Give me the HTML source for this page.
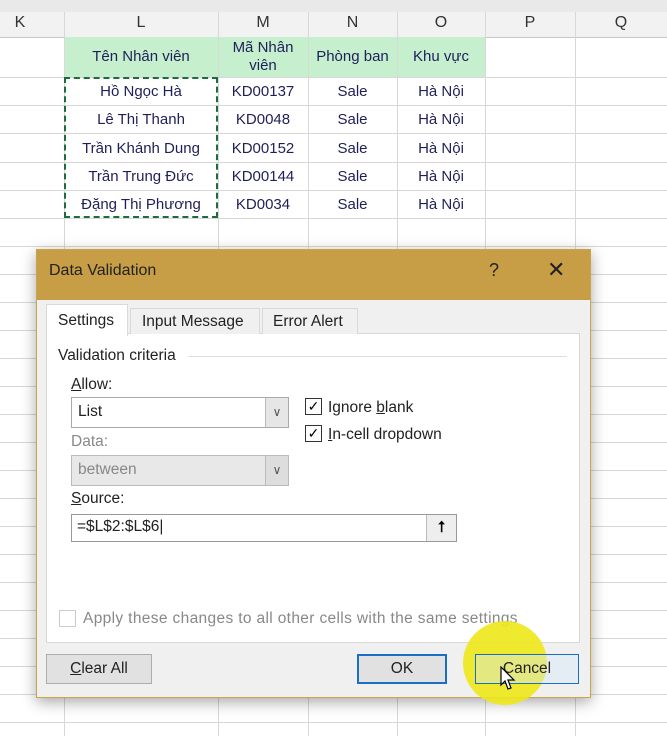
<!DOCTYPE html><html><head><style>
body{margin:0;width:667px;height:736px;overflow:hidden;background:#fff;font-family:"Liberation Sans",sans-serif;position:relative}
.a{position:absolute}
.hl{position:absolute;left:0;width:667px;height:1px;background:#d8d8d8}
.vl{position:absolute;top:12px;height:724px;width:1px;background:#d8d8d8}
.c{position:absolute;text-align:center;font-size:15px;color:#1f1f5a}
.d{font-size:15.5px;color:#222}
</style></head><body>
<div class="a" style="left:0;top:0;width:667px;height:12px;background:#e9e9e9"></div>
<div class="a" style="left:0;top:12px;width:667px;height:25px;background:#f2f2f2;border-bottom:1px solid #c8c8c8"></div>
<div class="a" style="left:64px;top:37px;width:421px;height:40px;background:#c6efce"></div>
<div class="vl" style="left:64px"></div><div class="vl" style="left:218px"></div><div class="vl" style="left:308px"></div><div class="vl" style="left:397px"></div><div class="vl" style="left:485px"></div><div class="vl" style="left:575px"></div>
<div class="hl" style="top:77px"></div><div class="hl" style="top:105px"></div><div class="hl" style="top:133px"></div><div class="hl" style="top:162px"></div><div class="hl" style="top:190px"></div><div class="hl" style="top:218px"></div><div class="hl" style="top:246px"></div><div class="hl" style="top:274px"></div><div class="hl" style="top:302px"></div><div class="hl" style="top:330px"></div><div class="hl" style="top:358px"></div><div class="hl" style="top:386px"></div><div class="hl" style="top:414px"></div><div class="hl" style="top:442px"></div><div class="hl" style="top:470px"></div><div class="hl" style="top:498px"></div><div class="hl" style="top:526px"></div><div class="hl" style="top:554px"></div><div class="hl" style="top:582px"></div><div class="hl" style="top:610px"></div><div class="hl" style="top:638px"></div><div class="hl" style="top:666px"></div><div class="hl" style="top:694px"></div><div class="hl" style="top:722px"></div>
<div class="c" style="left:0;top:14px;width:40px;color:#333;font-size:16px">K</div>
<div class="c" style="left:64px;top:14px;width:154px;color:#333;font-size:16px">L</div>
<div class="c" style="left:218px;top:14px;width:90px;color:#333;font-size:16px">M</div>
<div class="c" style="left:308px;top:14px;width:89px;color:#333;font-size:16px">N</div>
<div class="c" style="left:397px;top:14px;width:88px;color:#333;font-size:16px">O</div>
<div class="c" style="left:485px;top:14px;width:90px;color:#333;font-size:16px">P</div>
<div class="c" style="left:575px;top:14px;width:92px;color:#333;font-size:16px">Q</div>
<div class="c" style="left:64px;top:48px;width:154px">Tên Nhân viên</div>
<div class="c" style="left:218px;top:39px;width:90px;line-height:18px">Mã Nhân<br>viên</div>
<div class="c" style="left:308px;top:48px;width:89px">Phòng ban</div>
<div class="c" style="left:397px;top:48px;width:88px">Khu vực</div>
<div class="a" style="left:64px;top:77px;width:150px;height:137px;border:2px dashed #1e6b3e"></div>
<div class="c" style="left:64px;top:83px;width:154px">Hồ Ngọc Hà</div><div class="c" style="left:218px;top:83px;width:90px">KD00137</div><div class="c" style="left:308px;top:83px;width:89px">Sale</div><div class="c" style="left:397px;top:83px;width:88px">Hà Nội</div>
<div class="c" style="left:64px;top:111px;width:154px">Lê Thị Thanh</div><div class="c" style="left:218px;top:111px;width:90px">KD0048</div><div class="c" style="left:308px;top:111px;width:89px">Sale</div><div class="c" style="left:397px;top:111px;width:88px">Hà Nội</div>
<div class="c" style="left:64px;top:140px;width:154px">Trần Khánh Dung</div><div class="c" style="left:218px;top:140px;width:90px">KD00152</div><div class="c" style="left:308px;top:140px;width:89px">Sale</div><div class="c" style="left:397px;top:140px;width:88px">Hà Nội</div>
<div class="c" style="left:64px;top:168px;width:154px">Trần Trung Đức</div><div class="c" style="left:218px;top:168px;width:90px">KD00144</div><div class="c" style="left:308px;top:168px;width:89px">Sale</div><div class="c" style="left:397px;top:168px;width:88px">Hà Nội</div>
<div class="c" style="left:64px;top:196px;width:154px">Đặng Thị Phương</div><div class="c" style="left:218px;top:196px;width:90px">KD0034</div><div class="c" style="left:308px;top:196px;width:89px">Sale</div><div class="c" style="left:397px;top:196px;width:88px">Hà Nội</div>

<div class="a" style="left:36px;top:249px;width:553px;height:447px;background:#f0f0f0;border:1px solid #c9a54a;box-shadow:0 4px 14px rgba(0,0,0,.35)">
<div class="a" style="left:0;top:0;width:553px;height:50px;background:#c79e45"></div>
<div class="a d" style="left:12px;top:12px;font-size:16px">Data Validation</div>
<div class="a d" style="left:452px;top:10px;font-size:18px">?</div>
<div class="a d" style="left:510px;top:7px;font-size:22px">✕</div>
<div class="a" style="left:9px;top:83px;width:532px;height:308px;background:#fff;border:1px solid #d9d9d9"></div>
<div class="a" style="left:9px;top:54px;width:80px;height:31px;background:#fff;border:1px solid #d9d9d9;border-bottom:none"></div>
<div class="a d" style="left:21px;top:62px">Settings</div>
<div class="a" style="left:93px;top:58px;width:128px;height:25px;background:#f0f0f0;border:1px solid #d9d9d9;border-bottom:none"></div>
<div class="a d" style="left:105px;top:63px">Input Message</div>
<div class="a" style="left:225px;top:58px;width:94px;height:25px;background:#f0f0f0;border:1px solid #d9d9d9;border-bottom:none"></div>
<div class="a d" style="left:236px;top:63px">Error Alert</div>
<div class="a d" style="left:21px;top:97px">Validation criteria</div>
<div class="a" style="left:152px;top:106px;width:378px;height:1px;background:#ddd"></div>
<div class="a d" style="left:34px;top:126px"><u>A</u>llow:</div>
<div class="a" style="left:34px;top:147px;width:216px;height:29px;background:#fff;border:1px solid #aaa"></div>
<div class="a" style="left:228px;top:148px;width:22px;height:29px;background:#e6e6e6;border-left:1px solid #bbb;text-align:center;line-height:29px;color:#555;font-size:12px">∨</div>
<div class="a d" style="left:41px;top:153px">List</div>
<div class="a d" style="left:34px;top:183px;color:#888">Data:</div>
<div class="a" style="left:34px;top:205px;width:216px;height:29px;background:#e8e8e8;border:1px solid #bbb"></div>
<div class="a" style="left:228px;top:206px;width:22px;height:29px;background:#ddd;border-left:1px solid #bbb;text-align:center;line-height:29px;color:#555;font-size:12px">∨</div>
<div class="a d" style="left:41px;top:211px;color:#888">between</div>
<div class="a d" style="left:34px;top:240px"><u>S</u>ource:</div>
<div class="a" style="left:34px;top:264px;width:384px;height:26px;background:#fff;border:1px solid #999"></div>
<div class="a" style="left:389px;top:265px;width:29px;height:26px;background:#eee;border-left:1px solid #bbb;text-align:center;line-height:26px;font-weight:bold;font-size:15px">⭡</div>
<div class="a d" style="left:40px;top:268px">=$L$2:$L$6|</div>
<div class="a" style="left:268px;top:148px;width:15px;height:15px;border:1px solid #333;background:#fff;font-size:14px;line-height:15px;text-align:center">✓</div>
<div class="a d" style="left:291px;top:149px">Ignore <u>b</u>lank</div>
<div class="a" style="left:268px;top:175px;width:15px;height:15px;border:1px solid #333;background:#fff;font-size:14px;line-height:15px;text-align:center">✓</div>
<div class="a d" style="left:291px;top:176px"><u>I</u>n-cell dropdown</div>
<div class="a" style="left:22px;top:360px;width:15px;height:15px;border:1px solid #ccc;background:#fff"></div>
<div class="a d" style="left:46px;top:360px;color:#888;letter-spacing:0.35px">Apply these changes to all other cells with the same settings</div>
<div class="a" style="left:9px;top:404px;width:104px;height:28px;background:#e1e1e1;border:1px solid #adadad;text-align:center;line-height:28px" ><span class="d"><u>C</u>lear All</span></div>
<div class="a" style="left:320px;top:404px;width:86px;height:26px;background:#e1e1e1;border:2px solid #1a6fc4;text-align:center;line-height:26px"><span class="d">OK</span></div>
<div class="a" style="left:426px;top:371px;width:84px;height:84px;border-radius:50%;background:#ede81a;opacity:.9"></div>
<div class="a" style="left:438px;top:404px;width:102px;height:28px;border:1px solid #1a6fc4;text-align:center;line-height:28px;background:rgba(210,230,250,.4)"><span class="d">Cancel</span></div>
<svg class="a" style="left:463px;top:416px" width="16" height="26" viewBox="0 0 16 26"><path d="M1 1 L1 19 L5 15 L8 23 L11 22 L8 14 L14 14 Z" fill="#fff" stroke="#000" stroke-width="1.2"/></svg>
</div>
</body></html>
